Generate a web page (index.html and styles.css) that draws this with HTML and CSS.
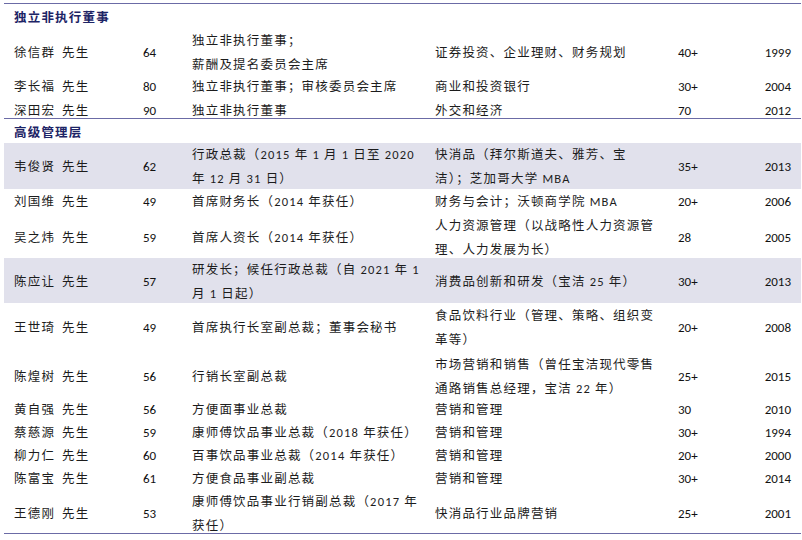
FILE: index.html
```html
<!DOCTYPE html>
<html lang="zh-CN">
<head>
<meta charset="utf-8">
<title>董事及高级管理层</title>
<link rel="stylesheet" href="styles.css">
</head>
<body>
<div class="page">
  <div class="table">
    <div class="sec h25"><span class="sec-title">独立非执行董事</span></div>
    <div class="row h45">
      <div class="c name"><span class="nm">徐信群</span>先生</div>
      <div class="c num">64</div>
      <div class="c txt">独立非执行董事；<br>薪酬及提名委员会主席</div>
      <div class="c txt">证券投资、企业理财、财务规划</div>
      <div class="c num">40+</div>
      <div class="c yr">1999</div>
    </div>
    <div class="row h25">
      <div class="c name"><span class="nm">李长福</span>先生</div>
      <div class="c num">80</div>
      <div class="c txt">独立非执行董事；审核委员会主席</div>
      <div class="c txt">商业和投资银行</div>
      <div class="c num">30+</div>
      <div class="c yr">2004</div>
    </div>
    <div class="row h19 last">
      <div class="c name"><span class="nm">深田宏</span>先生</div>
      <div class="c num">90</div>
      <div class="c txt">独立非执行董事</div>
      <div class="c txt">外交和经济</div>
      <div class="c num">70</div>
      <div class="c yr">2012</div>
    </div>

    <div class="sec h24"><span class="sec-title">高级管理层</span></div>
    <div class="row h46 shade">
      <div class="c name"><span class="nm">韦俊贤</span>先生</div>
      <div class="c num">62</div>
      <div class="c txt">行政总裁（2015 年 1 月 1 日至 2020<br>年 12 月 31 日）</div>
      <div class="c txt">快消品（拜尔斯道夫、雅芳、宝<br>洁）；芝加哥大学 MBA</div>
      <div class="c num">35+</div>
      <div class="c yr">2013</div>
    </div>
    <div class="row h25">
      <div class="c name"><span class="nm">刘国维</span>先生</div>
      <div class="c num">49</div>
      <div class="c txt">首席财务长（2014 年获任）</div>
      <div class="c txt">财务与会计；沃顿商学院 MBA</div>
      <div class="c num">20+</div>
      <div class="c yr">2006</div>
    </div>
    <div class="row h44">
      <div class="c name"><span class="nm">吴之炜</span>先生</div>
      <div class="c num">59</div>
      <div class="c txt">首席人资长（2014 年获任）</div>
      <div class="c txt">人力资源管理（以战略性人力资源管<br>理、人力发展为长）</div>
      <div class="c num">28</div>
      <div class="c yr">2005</div>
    </div>
    <div class="row h45 shade">
      <div class="c name"><span class="nm">陈应让</span>先生</div>
      <div class="c num">57</div>
      <div class="c txt">研发长；候任行政总裁（自 2021 年 1<br>月 1 日起）</div>
      <div class="c txt">消费品创新和研发（宝洁 25 年）</div>
      <div class="c num">30+</div>
      <div class="c yr">2013</div>
    </div>
    <div class="row h50">
      <div class="c name"><span class="nm">王世琦</span>先生</div>
      <div class="c num">49</div>
      <div class="c txt">首席执行长室副总裁；董事会秘书</div>
      <div class="c txt">食品饮料行业（管理、策略、组织变<br>革等）</div>
      <div class="c num">20+</div>
      <div class="c yr">2008</div>
    </div>
    <div class="row h45">
      <div class="c name"><span class="nm">陈煌树</span>先生</div>
      <div class="c num">56</div>
      <div class="c txt">行销长室副总裁</div>
      <div class="c txt">市场营销和销售（曾任宝洁现代零售<br>通路销售总经理，宝洁 22 年）</div>
      <div class="c num">25+</div>
      <div class="c yr">2015</div>
    </div>
    <div class="row h23">
      <div class="c name"><span class="nm">黄自强</span>先生</div>
      <div class="c num">56</div>
      <div class="c txt">方便面事业总裁</div>
      <div class="c txt">营销和管理</div>
      <div class="c num">30</div>
      <div class="c yr">2010</div>
    </div>
    <div class="row h23">
      <div class="c name"><span class="nm">蔡慈源</span>先生</div>
      <div class="c num">59</div>
      <div class="c txt">康师傅饮品事业总裁（2018 年获任）</div>
      <div class="c txt">营销和管理</div>
      <div class="c num">30+</div>
      <div class="c yr">1994</div>
    </div>
    <div class="row h23">
      <div class="c name"><span class="nm">柳力仁</span>先生</div>
      <div class="c num">60</div>
      <div class="c txt">百事饮品事业总裁（2014 年获任）</div>
      <div class="c txt">营销和管理</div>
      <div class="c num">20+</div>
      <div class="c yr">2000</div>
    </div>
    <div class="row h23">
      <div class="c name"><span class="nm">陈富宝</span>先生</div>
      <div class="c num">61</div>
      <div class="c txt">方便食品事业副总裁</div>
      <div class="c txt">营销和管理</div>
      <div class="c num">30+</div>
      <div class="c yr">2014</div>
    </div>
    <div class="row h43 last">
      <div class="c name"><span class="nm">王德刚</span>先生</div>
      <div class="c num">53</div>
      <div class="c txt">康师傅饮品事业行销副总裁（2017 年<br>获任）</div>
      <div class="c txt">快消品行业品牌营销</div>
      <div class="c num">25+</div>
      <div class="c yr">2001</div>
    </div>
  </div>
  <div class="source">资料来源：公司公告，华泰研究</div>
</div>
</body>
</html>
```

FILE: styles.css
```css
html, body {
  margin: 0;
  padding: 0;
  background: #ffffff;
}

.page {
  padding: 3px 1px 0 4px;
  width: 797px;
  font-family: "Carlito", "Lato", "Noto Sans CJK SC", sans-serif;
  color: #1c1c1c;
}

.table {
  border-top: 1px solid #6b6ba6;
}

.sec {
  display: flex;
  align-items: center;
  padding-left: 10px;
}

.sec-title {
  font-family: "Noto Sans CJK SC", sans-serif;
  font-weight: 700;
  font-size: 12.5px;
  letter-spacing: 1.2px;
  color: #1d2466;
}

.row {
  display: grid;
  grid-template-columns: 129px 49px 243px 243px 67px 66px;
  align-items: center;
}

.row.shade {
  background: #e1e1ec;
}

.row.last {
  border-bottom: 1px solid #6b6ba6;
}

.c {
  padding-left: 10px;
  line-height: 24px;
  white-space: nowrap;
}

.name,
.txt {
  font-size: 12.5px;
  letter-spacing: 1.2px;
  font-family: "Carlito", "Lato", "Noto Sans CJK SC", sans-serif;
}

.nm {
  margin-right: 7px;
}

.num,
.yr {
  font-size: 13px;
  color: #111111;
}

.yr {
  text-align: right;
  padding-left: 0;
  padding-right: 10px;
}

.h19 { height: 19px; }
.h23 { height: 23px; }
.h24 { height: 24px; }
.h25 { height: 25px; }
.h43 { height: 43px; }
.h44 { height: 44px; }
.h45 { height: 45px; }
.h46 { height: 46px; }
.h50 { height: 50px; }

.source {
  margin-top: 4px;
  padding-left: 4px;
  font-family: "Noto Sans CJK SC", sans-serif;
  font-size: 11px;
  color: #333333;
}
```
